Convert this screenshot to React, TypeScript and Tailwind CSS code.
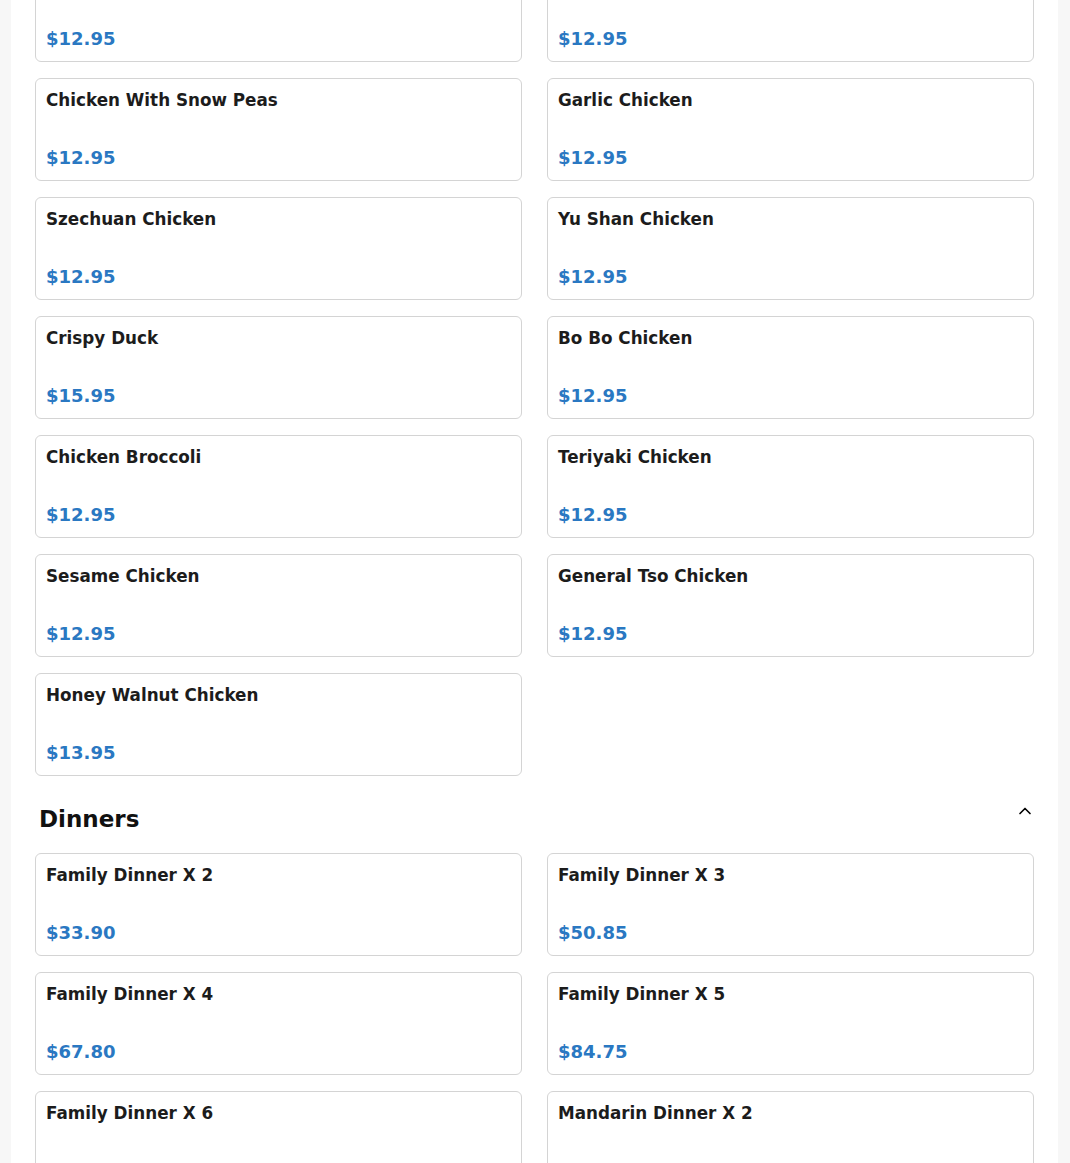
import { ChevronUp } from "lucide-react";

interface Item {
  name: string;
  price: string;
  faded?: boolean;
}

const chicken: Item[] = [
  { name: "Kung Pao Chicken", price: "$12.95" },
  { name: "Hunan Chicken", price: "$12.95" },
  { name: "Chicken With Snow Peas", price: "$12.95" },
  { name: "Garlic Chicken", price: "$12.95" },
  { name: "Szechuan Chicken", price: "$12.95" },
  { name: "Yu Shan Chicken", price: "$12.95" },
  { name: "Crispy Duck", price: "$15.95" },
  { name: "Bo Bo Chicken", price: "$12.95" },
  { name: "Chicken Broccoli", price: "$12.95" },
  { name: "Teriyaki Chicken", price: "$12.95" },
  { name: "Sesame Chicken", price: "$12.95" },
  { name: "General Tso Chicken", price: "$12.95" },
  { name: "Honey Walnut Chicken", price: "$13.95" },
];

const dinners: Item[] = [
  { name: "Family Dinner X 2", price: "$33.90" },
  { name: "Family Dinner X 3", price: "$50.85" },
  { name: "Family Dinner X 4", price: "$67.80" },
  { name: "Family Dinner X 5", price: "$84.75" },
  { name: "Family Dinner X 6", price: "$101.70", faded: true },
  { name: "Mandarin Dinner X 2", price: "$35.90", faded: true },
];

const MenuCard = ({ item }: { item: Item }) => (
  <div className="border border-[#d4d4d4] rounded-md bg-white px-[10px] pt-[11px] pb-[12px]">
    <div className="text-[16.8px] font-bold leading-5 text-[#1c1c1c]">{item.name}</div>
    <div
      className={
        item.faded
          ? "mt-[38px] text-lg font-bold leading-5 text-[#2a78c2] opacity-10"
          : "mt-[38px] text-lg font-bold leading-5 text-[#2a78c2]"
      }
    >
      {item.price}
    </div>
  </div>
);

const App = () => {
  return (
    <div className="h-[1163px] overflow-hidden bg-[#f7f7f7] font-['DejaVu_Sans',sans-serif]">
      <div className="w-[1047px] ml-[11px] bg-white px-6 min-h-full">
        {/* page is scrolled, first row is cut off */}
        <div className="-mt-[41px] grid grid-cols-2 gap-x-[25px] gap-y-4">
          {chicken.map((item, index) => (
            <MenuCard key={index} item={item} />
          ))}
        </div>

        <div className="flex items-center justify-between pl-1 mt-[27px] mb-[18px]">
          <h2 className="text-[23px] font-bold leading-8 text-[#111]">Dinners</h2>
          <ChevronUp size={20} strokeWidth={2} className="text-black -mt-[16px] -mr-[1px]" />
        </div>

        <div className="grid grid-cols-2 gap-x-[25px] gap-y-4">
          {dinners.map((item, index) => (
            <MenuCard key={index} item={item} />
          ))}
        </div>
      </div>
    </div>
  );
};

export default App;
